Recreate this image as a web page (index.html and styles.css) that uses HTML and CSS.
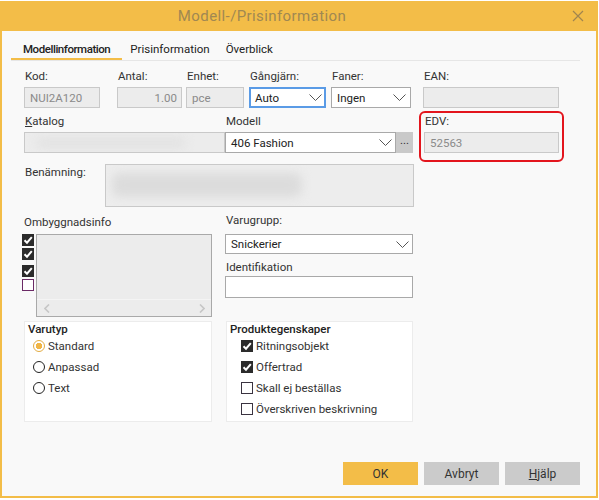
FILE: index.html
```html
<!DOCTYPE html>
<html>
<head lang="sv">
    <meta charset="UTF-8">
    <title>Modell-/Prisinformation</title>
    <link rel="stylesheet" href="styles.css">
</head>
<body>
<div class="window">
    <div class="titlebar">
        <span class="title">Modell-/Prisinformation</span>
        <svg class="close" width="12" height="12" viewBox="0 0 12 12">
            <path d="M1 1 L11 11 M11 1 L1 11" stroke="#a0854f" stroke-width="1.2" fill="none"/>
        </svg>
    </div>
    <div class="body">
        <div class="tabs">
            <div class="tab tab-active">Modellinformation</div>
            <div class="tab">Prisinformation</div>
            <div class="tab">Överblick</div>
        </div>

        <div class="form">
            <div class="row row-1">
                <div class="field f-kod">
                    <div class="label">Kod:</div>
                    <div class="input disabled">NUI2A120</div>
                </div>
                <div class="field f-antal">
                    <div class="label">Antal:</div>
                    <div class="input disabled right">1.00</div>
                </div>
                <div class="field f-enhet">
                    <div class="label">Enhet:</div>
                    <div class="input disabled">pce</div>
                </div>
                <div class="field f-gang">
                    <div class="label">Gångjärn:</div>
                    <div class="input select focused">
                        <span class="value">Auto</span>
                        <svg class="chev" width="13" height="7" viewBox="0 0 13 7"><polyline points="0.5,0.5 6.5,6.5 12.5,0.5" fill="none" stroke="#555" stroke-width="1"/></svg>
                    </div>
                </div>
                <div class="field f-faner">
                    <div class="label">Faner:</div>
                    <div class="input select">
                        <span class="value">Ingen</span>
                        <svg class="chev" width="13" height="7" viewBox="0 0 13 7"><polyline points="0.5,0.5 6.5,6.5 12.5,0.5" fill="none" stroke="#555" stroke-width="1"/></svg>
                    </div>
                </div>
                <div class="field f-ean">
                    <div class="label">EAN:</div>
                    <div class="input disabled"></div>
                </div>
            </div>

            <div class="row row-2">
                <div class="field f-katalog">
                    <div class="label"><u>K</u>atalog</div>
                    <div class="input disabled blurred"><span class="blur blur-katalog"></span></div>
                </div>
                <div class="field f-modell">
                    <div class="label">Modell</div>
                    <div class="modell-line">
                        <div class="input select">
                            <span class="value">406 Fashion</span>
                            <svg class="chev" width="13" height="7" viewBox="0 0 13 7"><polyline points="0.5,0.5 6.5,6.5 12.5,0.5" fill="none" stroke="#555" stroke-width="1"/></svg>
                        </div>
                        <div class="dots">...</div>
                    </div>
                </div>
                <div class="field f-edv">
                    <div class="label">EDV:</div>
                    <div class="input disabled">52563</div>
                </div>
            </div>

            <div class="row row-3">
                <div class="label side-label">Benämning:</div>
                <div class="textarea"><span class="blur blur-name"></span></div>
            </div>

            <div class="row row-4">
                <div class="col-left">
                    <div class="label om-label">Ombyggnadsinfo</div>
                    <div class="om-box">
                        <div class="om-checks">
                            <span class="check on"><svg width="12" height="12" viewBox="0 0 12 12"><polyline points="2.5,6.2 5,8.7 9.8,3.2" fill="none" stroke="#fff" stroke-width="2"/></svg></span>
                            <span class="check on"><svg width="12" height="12" viewBox="0 0 12 12"><polyline points="2.5,6.2 5,8.7 9.8,3.2" fill="none" stroke="#fff" stroke-width="2"/></svg></span>
                            <span class="check on gap"><svg width="12" height="12" viewBox="0 0 12 12"><polyline points="2.5,6.2 5,8.7 9.8,3.2" fill="none" stroke="#fff" stroke-width="2"/></svg></span>
                            <span class="check off purple"></span>
                        </div>
                        <div class="listbox">
                            <div class="list-area"></div>
                            <div class="hscroll">
                                <svg width="6" height="9" viewBox="0 0 6 9"><polyline points="5,0.5 1,4.5 5,8.5" fill="none" stroke="#c6c6c6" stroke-width="1.6"/></svg>
                                <svg width="6" height="9" viewBox="0 0 6 9"><polyline points="1,0.5 5,4.5 1,8.5" fill="none" stroke="#c6c6c6" stroke-width="1.6"/></svg>
                            </div>
                        </div>
                    </div>
                </div>
                <div class="col-right">
                    <div class="label">Varugrupp:</div>
                    <div class="input select vg-select">
                        <span class="value">Snickerier</span>
                        <svg class="chev" width="13" height="7" viewBox="0 0 13 7"><polyline points="0.5,0.5 6.5,6.5 12.5,0.5" fill="none" stroke="#555" stroke-width="1"/></svg>
                    </div>
                    <div class="label id-label">Identifikation</div>
                    <div class="input plain id-input"></div>
                </div>
            </div>

            <div class="row row-5">
                <div class="group g-varutyp">
                    <div class="group-title">Varutyp</div>
                    <div class="option">
                        <span class="radio on"></span><span>Standard</span>
                    </div>
                    <div class="option">
                        <span class="radio"></span><span>Anpassad</span>
                    </div>
                    <div class="option">
                        <span class="radio"></span><span>Text</span>
                    </div>
                </div>
                <div class="group g-produkt">
                    <div class="group-title">Produktegenskaper</div>
                    <div class="option">
                        <span class="check on"><svg width="12" height="12" viewBox="0 0 12 12"><polyline points="2.5,6.2 5,8.7 9.8,3.2" fill="none" stroke="#fff" stroke-width="2"/></svg></span><span>Ritningsobjekt</span>
                    </div>
                    <div class="option">
                        <span class="check on"><svg width="12" height="12" viewBox="0 0 12 12"><polyline points="2.5,6.2 5,8.7 9.8,3.2" fill="none" stroke="#fff" stroke-width="2"/></svg></span><span>Offertrad</span>
                    </div>
                    <div class="option">
                        <span class="check off"></span><span>Skall ej beställas</span>
                    </div>
                    <div class="option">
                        <span class="check off"></span><span>Överskriven beskrivning</span>
                    </div>
                </div>
            </div>
        </div>

        <div class="buttons">
            <button class="btn btn-ok">OK</button>
            <button class="btn">Avbryt</button>
            <button class="btn"><u>H</u>jälp</button>
        </div>
    </div>
</div>
</body>
</html>
```

FILE: styles.css
```css
*{
    box-sizing: border-box;
}
body{
    margin: 0;
    background: #ffffff;
    font-family: Roboto, "Liberation Sans", sans-serif;
    font-size: 11.5px;
    color: #333333;
}
.window{
    margin-top: 1px;
    width: 598px;
    height: 497px;
    border: 2px solid #f3bd48;
    border-top: 0;
    background: #f9f9f9;
    display: flex;
    flex-direction: column;
}
.titlebar{
    height: 30px;
    background: #f3bd48;
    display: flex;
    align-items: center;
    flex-shrink: 0;
}
.title{
    flex: 1;
    text-align: center;
    padding-right: 46px;
    font-size: 15px;
    letter-spacing: 0.4px;
    color: #a08852;
}
.close{
    margin: 0 12px 0 4px;
    display: block;
}
.body{
    flex: 1;
    display: flex;
    flex-direction: column;
    padding: 0 16px 11px 0;
}
.tabs{
    display: flex;
    margin: 9px 0 0 9px;
    border-bottom: 1px solid #e6e6e6;
}
.tab{
    line-height: 18px;
    padding: 0 8px;
    border-bottom: 2px solid transparent;
    color: #222222;
}
.tab-active{
    padding: 0 12px;
    font-weight: 500;
    letter-spacing: -0.45px;
    border-bottom-color: #f3bd48;
}

.form{
    padding-left: 22px;
}
.row{
    display: flex;
}
.label{
    line-height: 14px;
    height: 14px;
    padding-left: 1px;
    white-space: nowrap;
    color: #333333;
}
.input{
    height: 21px;
    margin-top: 4px;
    border: 1px solid #a9a9a9;
    background: #ffffff;
    padding: 0 5px;
    display: flex;
    align-items: center;
    white-space: nowrap;
    color: #222222;
}
.input.disabled{
    background: #ececec;
    border-color: #c9c9c9;
    color: #8a8a8a;
}
.input.right{
    justify-content: flex-end;
    padding-right: 4px;
}
.select .value{
    flex: 1;
}
.select .chev{
    display: block;
    margin-right: -1px;
}
.input.focused{
    border: 2px solid #5a9be6;
    padding: 0 3px 0 4px;
}

.row-1{
    margin-top: 8px;
}
.f-kod{ width: 76px; margin-right: 17px; }
.f-antal{ width: 65px; margin-right: 4px; }
.f-enhet{ width: 58px; margin-right: 5px; }
.f-gang{ width: 77px; margin-right: 5px; }
.f-faner{ width: 80px; margin-right: 12px; }
.f-ean{ width: 136px; }

.row-2{
    margin-top: 6px;
}
.f-katalog{ width: 201px; }
.f-modell{ width: 188px; }
.f-edv{
    width: 135px;
    margin-left: 11px;
    position: relative;
}
.f-edv::after{
    content: "";
    position: absolute;
    left: -5px;
    right: -5px;
    top: -3px;
    bottom: -9px;
    border: 2px solid #e3151d;
    border-radius: 6px;
}
.modell-line{
    display: flex;
    margin-top: 4px;
}
.modell-line .input{
    margin-top: 0;
    width: 171px;
    padding-right: 4px;
}
.dots{
    width: 17px;
    height: 21px;
    background: #c9c9c9;
    text-align: center;
    line-height: 17px;
    color: #333333;
}
.blurred{
    overflow: hidden;
    position: relative;
    background: #e9e9e9;
}
.blur{
    display: block;
    background: #dedede;
    filter: blur(5px);
    border-radius: 8px;
}
.blur-katalog{
    width: 150px;
    height: 10px;
    margin-left: 6px;
    background: #e2e2e2;
}

.row-3{
    margin-top: 11px;
}
.side-label{
    width: 81px;
    margin-top: 1px;
}
.textarea{
    width: 309px;
    height: 43px;
    border: 1px solid #c9c9c9;
    background: #ededed;
    padding: 8px 0 0 6px;
    overflow: hidden;
}
.blur-name{
    width: 190px;
    height: 24px;
    background: #dcdcdc;
}

.row-4{
    margin-top: 6px;
}
.col-left{
    width: 190px;
    margin-left: -2px;
    margin-right: 13px;
}
.om-label{
    margin-top: 2px;
    padding-left: 2px;
}
.om-box{
    display: flex;
    margin-top: 5px;
}
.om-checks{
    width: 12px;
    margin-right: 2px;
    display: flex;
    flex-direction: column;
}
.om-checks .check{
    margin-bottom: 2px;
}
.om-checks .check.gap{
    margin-top: 3px;
}
.check{
    width: 12px;
    height: 12px;
    display: block;
    flex-shrink: 0;
}
.check svg{
    display: block;
}
.check.on{
    background: #2b2b2b;
}
.check.off{
    background: #ffffff;
    border: 1px solid #3a3340;
}
.check.purple{
    border-color: #6b2a66;
}
.listbox{
    width: 176px;
    height: 83px;
    border: 1px solid #a9a9a9;
    background: #ececec;
    display: flex;
    flex-direction: column;
}
.list-area{
    flex: 1;
}
.hscroll{
    height: 17px;
    border-top: 1px solid #f4f4f4;
    display: flex;
    align-items: center;
    justify-content: space-between;
    padding: 0 6px 0 7px;
}
.hscroll svg{
    display: block;
}
.col-right{
    width: 188px;
}
.vg-select{
    margin-top: 7px;
    height: 20px;
    padding-right: 4px;
}
.id-label{
    margin-top: 6px;
}
.id-input{
    margin-top: 2px;
    height: 22px;
}

.row-5{
    margin-top: 4px;
}
.group{
    height: 101px;
    background: #ffffff;
    border: 1px solid #ececec;
    padding: 1px 3px 0;
}
.g-varutyp{
    width: 188px;
    margin-right: 14px;
}
.g-produkt{
    width: 187px;
}
.group-title{
    font-weight: 500;
    line-height: 12px;
    color: #222222;
}
.option{
    height: 21px;
    display: flex;
    align-items: center;
    gap: 3px;
    color: #333333;
}
.g-varutyp .option{
    padding-left: 5px;
}
.g-produkt .option{
    padding-left: 11px;
}
.radio{
    width: 12px;
    height: 12px;
    border-radius: 50%;
    border: 1px solid #222222;
    background: #ffffff;
    flex-shrink: 0;
}
.radio.on{
    border-color: #e3ac43;
    background: radial-gradient(circle, #f0b546 0 3px, #ffffff 3.5px);
}

.buttons{
    margin-top: auto;
    display: flex;
    justify-content: flex-end;
    gap: 6px;
}
.btn{
    width: 75px;
    height: 23px;
    border: 0;
    background: #cbcbcb;
    font-family: Roboto, "Liberation Sans", sans-serif;
    font-size: 12px;
    color: #333333;
    padding: 0;
}
.btn-ok{
    background: #f3bd48;
}
```
